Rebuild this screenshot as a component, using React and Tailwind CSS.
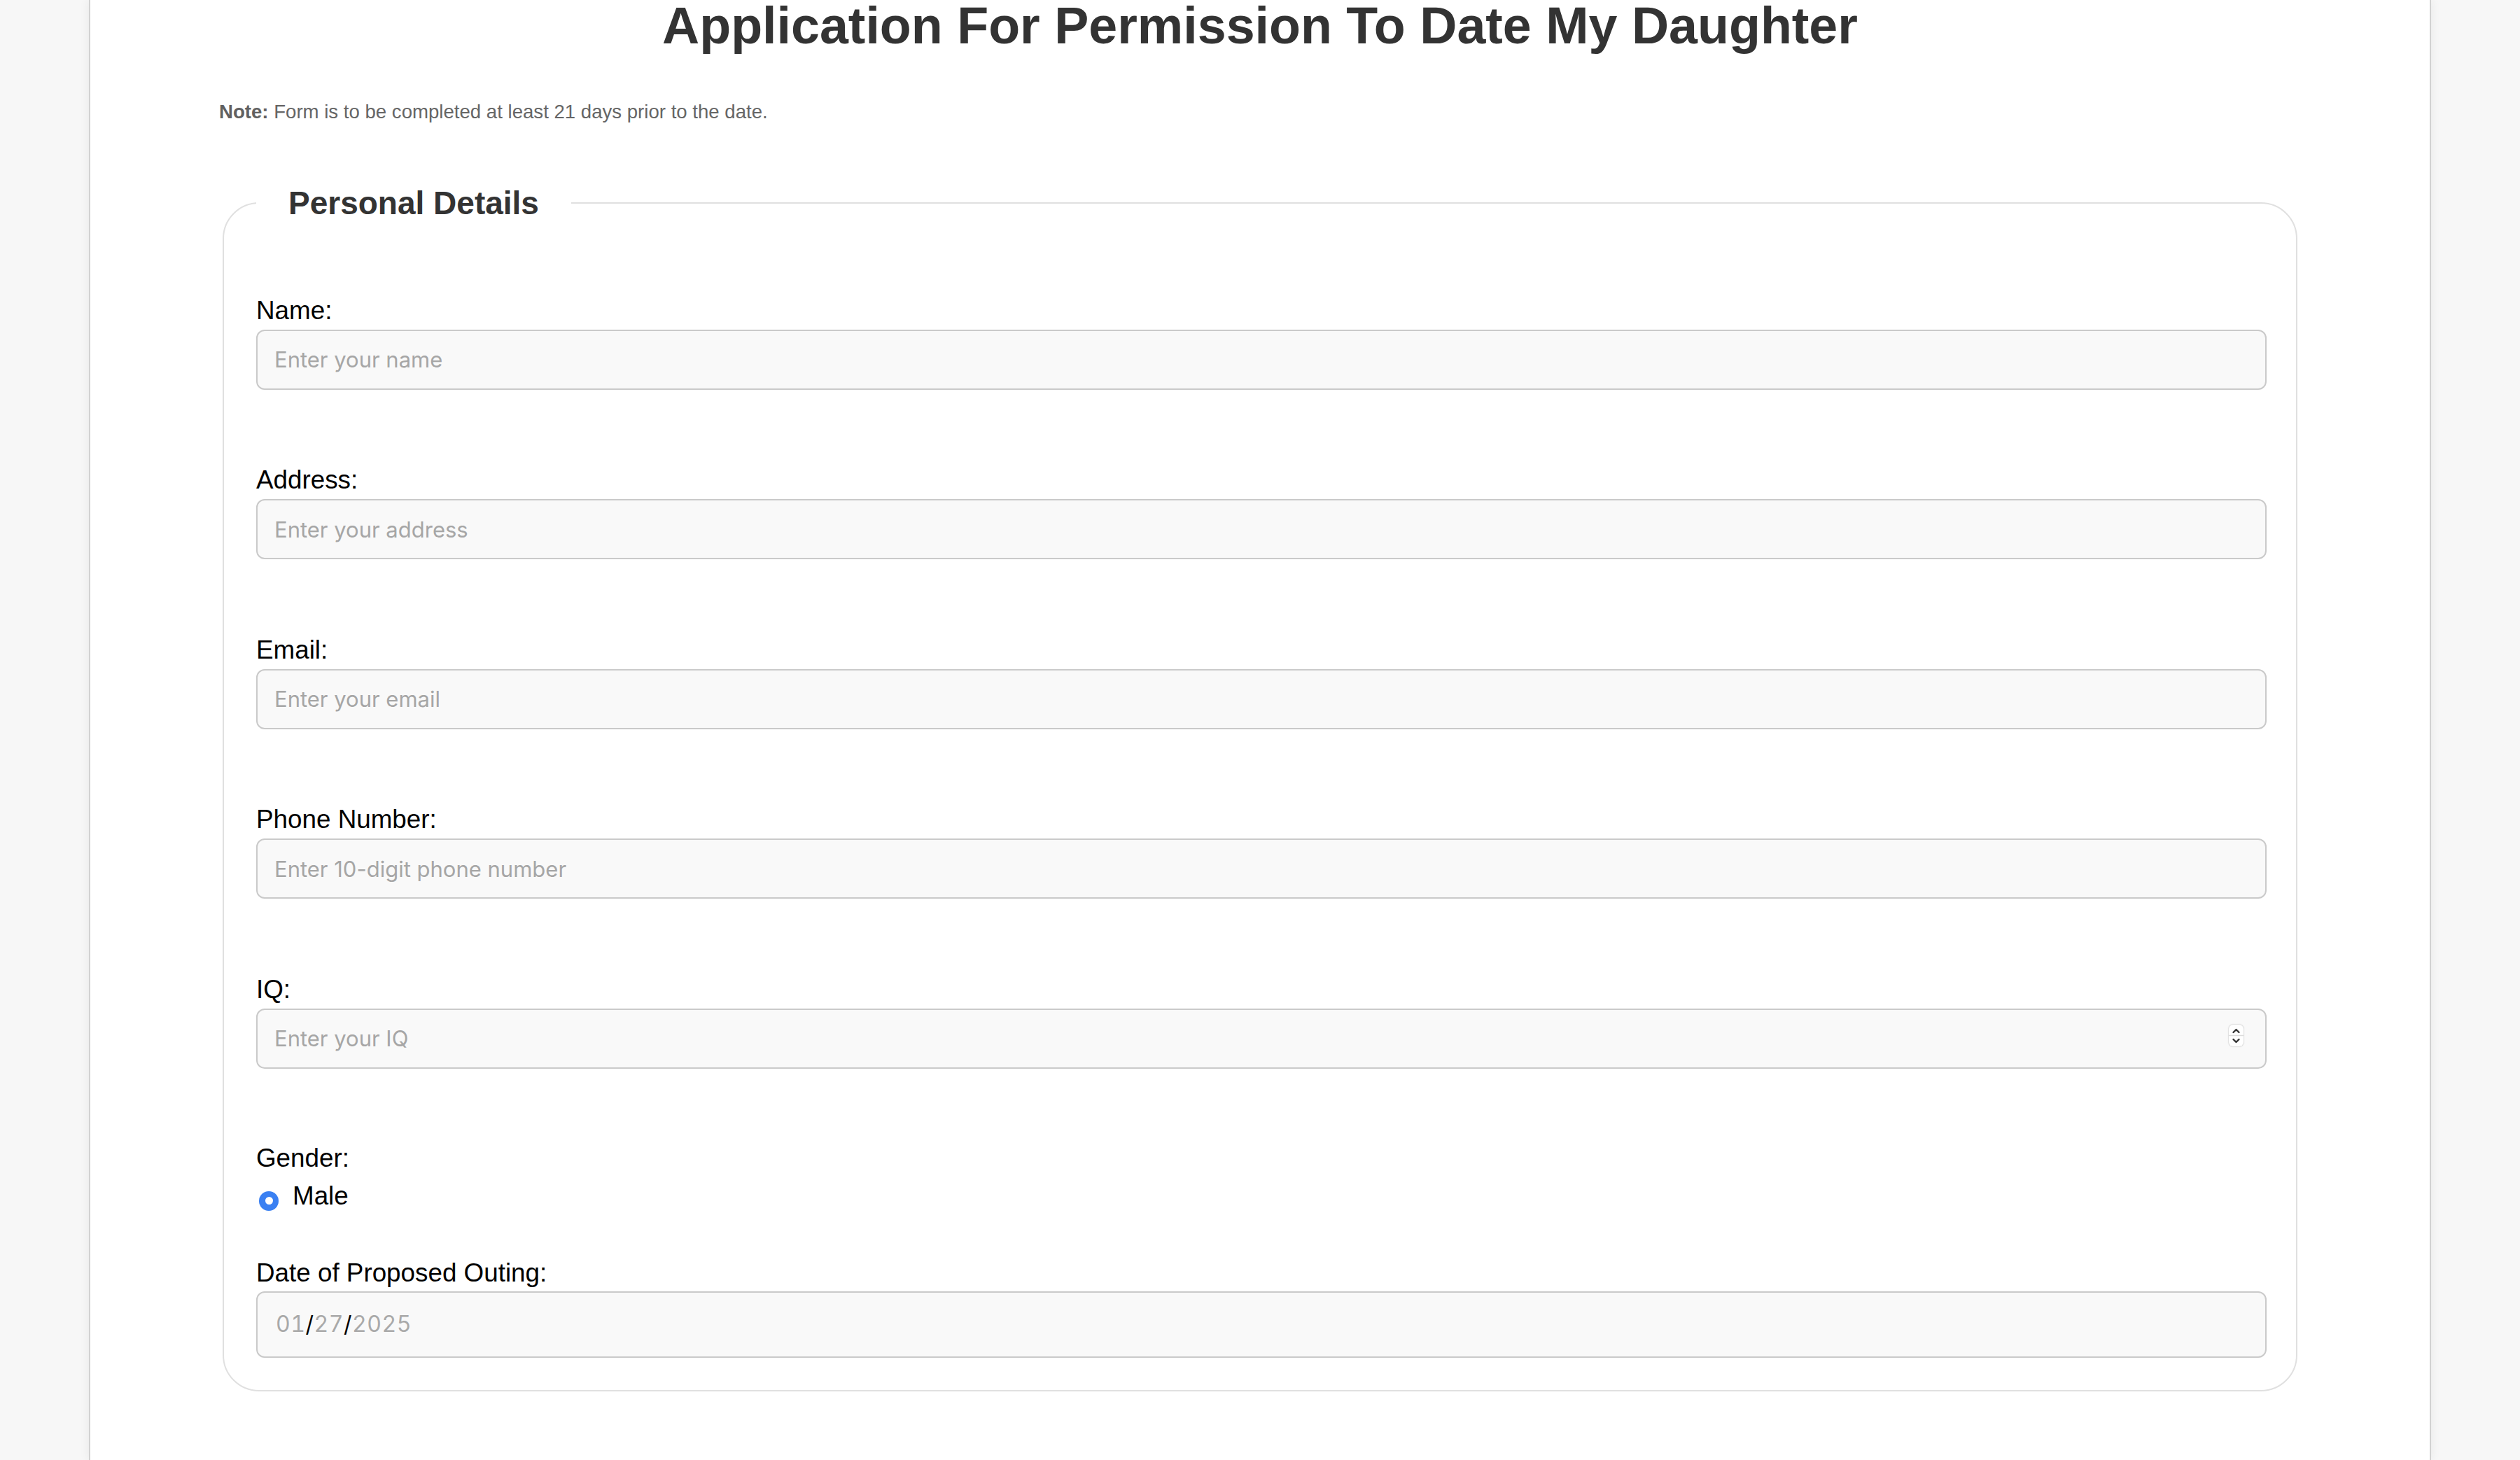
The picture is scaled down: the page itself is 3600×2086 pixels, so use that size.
import React from "react";

const inputCls =
  "block w-full h-[86px] border-2 border-[#cacaca] rounded-[12px] bg-[#f9f9f9] px-[24px] text-[31px] text-black font-['Inter',sans-serif] placeholder:text-[#a6a6a6] outline-none appearance-none";
const labelCls =
  "block text-[36.8px] leading-[41px] text-black mb-[7px]";

function Field({ label, placeholder, mb = "mb-[108.5px]" }) {
  return (
    <div className={mb}>
      <label className={labelCls}>{label}</label>
      <input className={inputCls} placeholder={placeholder} />
    </div>
  );
}

function Spinner() {
  return (
    <div className="absolute right-[33px] top-[23px] w-[21px] h-[31px] rounded-[6px] bg-white shadow-[0_0_2px_rgba(0,0,0,0.35)]">
      <svg width="21" height="31" viewBox="0 0 21 31" fill="none">
        <path d="M6.5 11 L10.5 7 L14.5 11" stroke="#333" strokeWidth="2.4" strokeLinecap="round" strokeLinejoin="round" />
        <line x1="0" y1="15.5" x2="21" y2="15.5" stroke="#dcdcdc" strokeWidth="1.5" />
        <path d="M6.5 21 L10.5 25 L14.5 21" stroke="#333" strokeWidth="2.4" strokeLinecap="round" strokeLinejoin="round" />
      </svg>
    </div>
  );
}

export default function App() {
  return (
    <div className="min-h-screen bg-[#f7f7f7] font-['Liberation_Sans',Arial,Helvetica,sans-serif]">
      <div className="mx-auto flex flex-col w-[3346px] min-h-[2086px] bg-white border-x-2 border-[#d2d2d2] shadow-[0_0_14px_rgba(0,0,0,0.07)] px-[184px] overflow-hidden">
        <h1 className="text-center text-[73.6px] leading-[74px] font-bold text-[#333]">
          Application For Permission To Date My Daughter
        </h1>
        <p className="mt-[70px] text-[27.6px] leading-[31.7px] text-[#666]">
          <strong className="font-bold text-[#606060]">Note:</strong> Form is to be completed at least 21 days prior to the date.
        </p>
        <fieldset className="mt-[88px] mx-[5px] border-2 border-[#e0e0e0] rounded-[52px] pl-[46px] pr-[42px] pt-[106px] pb-[46px]">
          <legend className="px-[46px] text-[46px] leading-[53px] font-bold text-[#333]">
            Personal Details
          </legend>
          <Field label="Name:" placeholder="Enter your name" />
          <Field label="Address:" placeholder="Enter your address" />
          <Field label="Email:" placeholder="Enter your email" />
          <Field label="Phone Number:" placeholder="Enter 10-digit phone number" />
          <div className="mb-[107px]">
            <label className={labelCls}>IQ:</label>
            <div className="relative">
              <input className={inputCls} placeholder="Enter your IQ" />
              <Spinner />
            </div>
          </div>
          <div className="mb-[68px]">
            <div className="text-[36.8px] leading-[41px] text-black">Gender:</div>
            <div className="flex items-start mt-[13px]">
              <div className="mt-[14px] ml-[4px] mr-[20px] w-[28px] h-[28px] rounded-full bg-[#3a80f2] flex items-center justify-center shrink-0">
                <div className="w-[11px] h-[11px] rounded-full bg-white" />
              </div>
              <span className="text-[36.8px] leading-[41px] text-black">Male</span>
            </div>
          </div>
          <div>
            <label className="block text-[36.8px] leading-[41px] text-black mb-[6px]">Date of Proposed Outing:</label>
            <div className="flex items-center w-full h-[95px] border-2 border-[#cacaca] rounded-[12px] bg-[#f9f9f9] pl-[26px] text-[32px] tabular-nums tracking-[0.5px] font-['Inter',sans-serif]">
              <span className="text-[#a9a9a9]">01</span>
              <span className="text-black">/</span>
              <span className="text-[#a9a9a9]">27</span>
              <span className="text-black">/</span>
              <span className="text-[#a9a9a9]">2025</span>
            </div>
          </div>
        </fieldset>
      </div>
    </div>
  );
}
